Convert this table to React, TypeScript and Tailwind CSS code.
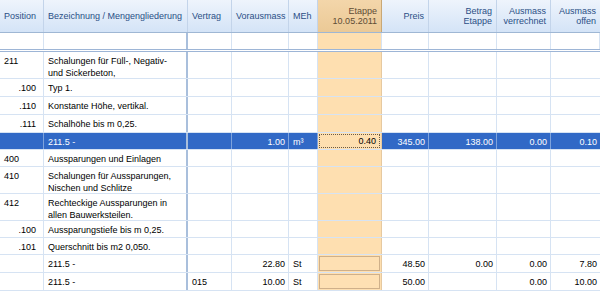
import React from 'react';

type Row = {
  pos?: string;
  sub?: boolean;
  desc: string[];
  vertrag?: string;
  vor?: string;
  meh?: string;
  etappe?: 'box' | 'value';
  etappeValue?: string;
  preis?: string;
  betrag?: string;
  verr?: string;
  offen?: string;
  h: string;
  selected?: boolean;
};

const rows: Row[] = [
  { pos: '211', desc: ['Schalungen für Füll-, Negativ-', 'und Sickerbeton,'], h: 'h-[27px]' },
  { pos: '.100', sub: true, desc: ['Typ 1.'], h: 'h-[18px]' },
  { pos: '.110', sub: true, desc: ['Konstante Höhe, vertikal.'], h: 'h-[18px]' },
  { pos: '.111', sub: true, desc: ['Schalhöhe bis m 0,25.'], h: 'h-[18px]' },
  {
    desc: ['211.5 -'],
    vor: '1.00',
    meh: 'm³',
    etappe: 'value',
    etappeValue: '0.40',
    preis: '345.00',
    betrag: '138.00',
    verr: '0.00',
    offen: '0.10',
    h: 'h-[17px]',
    selected: true,
  },
  { pos: '400', desc: ['Aussparungen und Einlagen'], h: 'h-[17px]' },
  { pos: '410', desc: ['Schalungen für Aussparungen,', 'Nischen und Schlitze'], h: 'h-[27px]' },
  { pos: '412', desc: ['Rechteckige Aussparungen in', 'allen Bauwerksteilen.'], h: 'h-[27px]' },
  { pos: '.100', sub: true, desc: ['Aussparungstiefe bis m 0,25.'], h: 'h-[17px]' },
  { pos: '.101', sub: true, desc: ['Querschnitt bis m2 0,050.'], h: 'h-[17px]' },
  {
    desc: ['211.5 -'],
    vor: '22.80',
    meh: 'St',
    etappe: 'box',
    preis: '48.50',
    betrag: '0.00',
    verr: '0.00',
    offen: '7.80',
    h: 'h-[18px]',
  },
  {
    desc: ['211.5 -'],
    vertrag: '015',
    vor: '10.00',
    meh: 'St',
    etappe: 'box',
    preis: '50.00',
    verr: '0.00',
    offen: '10.00',
    h: 'h-[18px]',
  },
];

// column widths, right border included
const W = ['w-[44px]', 'w-[144px]', 'w-[44px]', 'w-[57px]', 'w-[29px]', 'w-[64px]', 'w-[47px]', 'w-[68px]', 'w-[54px]', 'w-[49px]'];

export default function App() {
  const hcell =
    'h-full shrink-0 border-r border-[#c3d4ea] flex flex-col justify-center px-[4px] leading-[10px] text-[#2b4f86]';

  return (
    <div
      className="w-[600px] h-[291px] overflow-hidden bg-white text-[9px] text-black"
      style={{ fontFamily: '"Liberation Sans", Arial, sans-serif' }}
    >
      {/* header */}
      <div className="flex h-[33px] border-b border-[#9fb7d4] bg-gradient-to-b from-[#eef4fc] to-[#d4e4f7]">
        <div className={`${hcell} ${W[0]}`}>Position</div>
        <div className={`${hcell} ${W[1]}`}>Bezeichnung / Mengengliederung</div>
        <div className={`${hcell} ${W[2]}`}>Vertrag</div>
        <div className={`${hcell} ${W[3]}`}>Vorausmass</div>
        <div className={`${hcell} ${W[4]}`}>MEh</div>
        <div
          className={`h-full shrink-0 ${W[5]} border-r border-[#c9a876] bg-gradient-to-b from-[#f3d6aa] to-[#ebc996] text-[#5e4c35] flex flex-col justify-center items-end px-[4px] leading-[10px]`}
        >
          <span>Etappe</span>
          <span>10.05.2011</span>
        </div>
        <div className={`${hcell} ${W[6]} items-end`}>Preis</div>
        <div className={`${hcell} ${W[7]} items-end`}>
          <span>Betrag</span>
          <span>Etappe</span>
        </div>
        <div className={`${hcell} ${W[8]} items-end`}>
          <span>Ausmass</span>
          <span>verrechnet</span>
        </div>
        <div className={`${hcell} ${W[9]} items-end border-r-0`}>
          <span>Ausmass</span>
          <span>offen</span>
        </div>
      </div>

      {/* filter row */}
      <div className="flex h-[19px] border-b-[3px] border-double border-[#9db5d6]">
        {W.map((w, i) => (
          <div
            key={i}
            className={`h-full shrink-0 ${w} ${
              i === 1 ? 'border-r-2 border-[#a9bfdc]' : 'border-r border-[#d6e3f3]'
            } ${i === 5 ? 'bg-[#fedfb0]' : ''}`}
          />
        ))}
      </div>

      {rows.map((r, i) => {
        const sel = r.selected;
        const base = `h-full shrink-0 pt-[3px] leading-[12px] border-r ${
          sel ? 'bg-[#3169c6] text-white border-[#7ea3dc]' : 'border-[#d6e3f3]'
        }`;
        return (
          <div key={i} className={`flex ${r.h} border-b border-[#d6e3f3]`}>
            <div className={`${base} ${W[0]} ${r.sub ? 'text-right pr-[7px]' : 'pl-[4px]'}`}>{r.pos}</div>
            <div
              className={`h-full shrink-0 pt-[3px] leading-[12px] ${W[1]} pl-[4px] border-r-2 border-[#a9bfdc] ${
                sel ? 'bg-[#3169c6] text-white' : ''
              }`}
            >
              {r.desc.map((d, j) => (
                <div key={j}>{d}</div>
              ))}
            </div>
            <div className={`${base} ${W[2]} pl-[4px]`}>{r.vertrag}</div>
            <div className={`${base} ${W[3]} text-right pr-[3px]`}>{r.vor}</div>
            <div className={`${base} ${W[4]} pl-[4px]`}>{r.meh}</div>
            <div className={`h-full shrink-0 ${W[5]} border-r border-[#e6c9a0] bg-[#fedfb0] p-[1px]`}>
              {r.etappe === 'value' && (
                <div className="h-full border border-dotted border-[#6b5b45] text-right pr-[3px] leading-[13px]">
                  {r.etappeValue}
                </div>
              )}
              {r.etappe === 'box' && <div className="h-full border border-[#cfb08a] bg-[#fee0b3]" />}
            </div>
            <div className={`${base} ${W[6]} text-right pr-[3px]`}>{r.preis}</div>
            <div className={`${base} ${W[7]} text-right pr-[3px]`}>{r.betrag}</div>
            <div className={`${base} ${W[8]} text-right pr-[3px]`}>{r.verr}</div>
            <div className={`${base} ${W[9]} text-right pr-[3px] border-r-0`}>{r.offen}</div>
          </div>
        );
      })}
    </div>
  );
}
